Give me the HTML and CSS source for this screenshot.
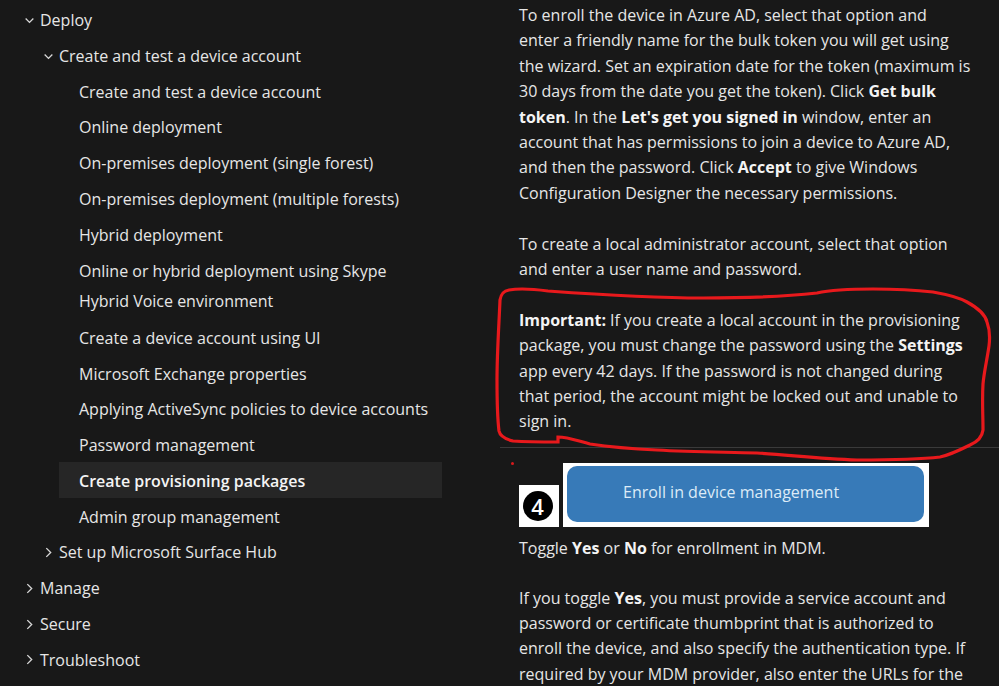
FILE: index.html
```html
<!DOCTYPE html>
<html lang="en">
<head>
    <meta charset="UTF-8">
    <title>Create provisioning packages</title>
    <link rel="stylesheet" href="styles.css">
</head>
<body>
    <nav class="toc">
        <ul class="tree">
            <li>
                <div class="node"><svg class="chev" viewBox="0 0 10 10"><path d="M1.5 3.2 5 6.7 8.5 3.2"/></svg>Deploy</div>
                <ul class="tree sub">
                    <li>
                        <div class="node"><svg class="chev" viewBox="0 0 10 10"><path d="M1.5 3.2 5 6.7 8.5 3.2"/></svg>Create and test a device account</div>
                        <ul class="tree leaves">
                            <li class="leaf">Create and test a device account</li>
                            <li class="leaf">Online deployment</li>
                            <li class="leaf">On-premises deployment (single forest)</li>
                            <li class="leaf">On-premises deployment (multiple forests)</li>
                            <li class="leaf">Hybrid deployment</li>
                            <li class="leaf wrapped">Online or hybrid deployment using Skype<br>Hybrid Voice environment</li>
                            <li class="leaf">Create a device account using UI</li>
                            <li class="leaf">Microsoft Exchange properties</li>
                            <li class="leaf">Applying ActiveSync policies to device accounts</li>
                            <li class="leaf">Password management</li>
                            <li class="leaf selected">Create provisioning packages</li>
                            <li class="leaf">Admin group management</li>
                        </ul>
                    </li>
                    <li>
                        <div class="node"><svg class="chev" viewBox="0 0 10 10"><path d="M3 1 7 5 3 9"/></svg>Set up Microsoft Surface Hub</div>
                    </li>
                </ul>
            </li>
            <li><div class="node"><svg class="chev" viewBox="0 0 10 10"><path d="M3 1 7 5 3 9"/></svg>Manage</div></li>
            <li><div class="node"><svg class="chev" viewBox="0 0 10 10"><path d="M3 1 7 5 3 9"/></svg>Secure</div></li>
            <li><div class="node"><svg class="chev" viewBox="0 0 10 10"><path d="M3 1 7 5 3 9"/></svg>Troubleshoot</div></li>
        </ul>
    </nav>

    <main class="article">
        <div class="cell">
            <p>To enroll the device in Azure AD, select that option and<br>
            enter a friendly name for the bulk token you will get using<br>
            the wizard. Set an expiration date for the token (maximum is<br>
            30 days from the date you get the token). Click <b>Get bulk</b><br>
            <b>token</b>. In the <b>Let's get you signed in</b> window, enter an<br>
            account that has permissions to join a device to Azure AD,<br>
            and then the password. Click <b>Accept</b> to give Windows<br>
            Configuration Designer the necessary permissions.</p>
            <p>To create a local administrator account, select that option<br>
            and enter a user name and password.</p>
            <p><b>Important:</b> If you create a local account in the provisioning<br>
            package, you must change the password using the <b>Settings</b><br>
            app every 42 days. If the password is not changed during<br>
            that period, the account might be locked out and unable to<br>
            sign in.</p>
        </div>
        <div class="cell next">
            <div class="step">
                <div class="badge"><span class="badge-num">4</span></div>
                <div class="shot"><div class="shot-btn">Enroll in device management</div></div>
            </div>
            <p class="after-step">Toggle <b>Yes</b> or <b>No</b> for enrollment in MDM.</p>
            <p>If you toggle <b>Yes</b>, you must provide a service account and<br>
            password or certificate thumbprint that is authorized to<br>
            enroll the device, and also specify the authentication type. If<br>
            required by your MDM provider, also enter the URLs for the</p>
        </div>
    </main>

    <!-- red marker drawn over the screenshot -->
    <svg class="scribble" viewBox="0 0 999 686">
        <path d="M500 300C501 294 503 291 509 290C520 288 533 289 548 291C590 294 650 298 703 298C745 298 790 296 817 293C835 289 855 289 873 289C895 289 915 290 933 292C950 295 960 298 967 302C978 308 985 314 987 322C990 330 990 338 989 346C987 360 984 372 983 384C982 400 983 415 983 430C982 438 977 442 970 445C960 450 950 455 940 457C915 460 885 460 857 460C820 459 790 455 757 453C720 452 690 452 657 450C635 449 610 447 590 444C578 441 568 437 558 437L558 442C545 442 528 442 513 441C505 439 500 436 499 431C497 415 497 398 497 380C497 352 499 325 500 300Z"/>
    </svg>
    <div class="dot"></div>
</body>
</html>
```

FILE: styles.css
```css
html, body {
    margin: 0;
    height: 100%;
    overflow: hidden;
}

body {
    display: flex;
    background: #181818;
    color: #e6e6e6;
    font-family: 'Open Sans', 'Noto Sans', sans-serif;
    font-size: 16px;
}

b {
    font-weight: 700;
    color: #f4f4f4;
}

.toc {
    width: 442px;
    padding: 1px 0 0 40px;
    box-sizing: border-box;
    flex: none;
}

.tree {
    list-style: none;
    margin: 0;
    padding: 0;
}

.tree.sub {
    margin-left: 19px;
}

.node, .leaf {
    line-height: 32.75px;
    padding-top: 3px;
    white-space: nowrap;
}

.node {
    display: flex;
    align-items: center;
    margin-left: -19px;
}

.chev {
    width: 11px;
    height: 11px;
    margin: 0 5px 0 3px;
    flex: none;
}

.chev path {
    fill: none;
    stroke: #d8d8d8;
    stroke-width: 1.2;
}

.leaf {
    padding-left: 20px;
}

.leaf.wrapped {
    line-height: 30px;
    padding-top: 4.5px;
    padding-bottom: 3px;
}

.leaf.selected {
    background: #262626;
    font-weight: 600;
    color: #f4f4f4;
}

.article {
    margin-left: 58px;
    flex: 1;
    line-height: 25.4px;
    white-space: nowrap;
}

.article p {
    margin: 0 0 25.4px;
}

.cell {
    padding: 3px 0 0 19px;
}

.cell > p:last-child {
    margin-bottom: 0;
}

.cell.next {
    border-top: 1px solid #3a3a3a;
    margin-top: 12px;
    padding-top: 15px;
}

.step {
    display: flex;
    align-items: flex-end;
    gap: 4px;
}

.badge {
    width: 40px;
    height: 42px;
    background: #fff;
    display: flex;
    align-items: center;
    justify-content: center;
    padding-right: 3px;
    box-sizing: border-box;
}

.badge-num {
    width: 30px;
    height: 30px;
    border-radius: 50%;
    background: #000;
    color: #fff;
    font-weight: 600;
    font-size: 22px;
    line-height: 30px;
    text-align: center;
}

.shot {
    width: 366px;
    height: 64px;
    background: #fff;
    padding: 3px 5px 5px 4px;
    box-sizing: border-box;
}

.shot-btn {
    height: 100%;
    background: #377ab8;
    border-radius: 10px;
    color: #dcebf7;
    line-height: 53px;
    padding-left: 56px;
}

.article .after-step {
    margin-top: 9px;
    margin-bottom: 24.4px;
}

.scribble {
    position: absolute;
    left: 0;
    top: 0;
    width: 999px;
    height: 686px;
    pointer-events: none;
}

.scribble path {
    fill: none;
    stroke: #e8191c;
    stroke-width: 3.2;
}

.dot {
    position: absolute;
    left: 511px;
    top: 462px;
    width: 3px;
    height: 3px;
    border-radius: 50%;
    background: #d81a1c;
}
```
